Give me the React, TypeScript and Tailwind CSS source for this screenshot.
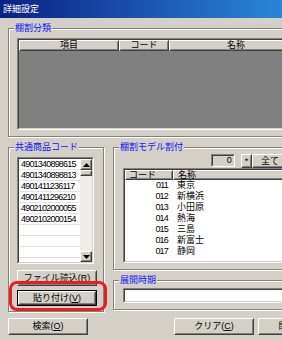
import React from "react";

type BoxProps = { className?: string; inner?: string; children?: React.ReactNode };

function Raised({ className = "", inner = "", children }: BoxProps) {
  return (
    <div className={"border border-t-white border-l-white border-b-[#404040] border-r-[#404040] bg-[#d4d0c8] " + className}>
      <div className={"w-full h-full border border-t-transparent border-l-transparent border-b-[#808080] border-r-[#808080] flex items-center justify-center whitespace-nowrap " + inner}>
        {children}
      </div>
    </div>
  );
}

function Sunken({ className = "", inner = "", children }: BoxProps) {
  return (
    <div className={"border border-t-[#808080] border-l-[#808080] border-b-white border-r-white " + className}>
      <div className={"w-full h-full border border-t-[#404040] border-l-[#404040] border-b-[#d4d0c8] border-r-[#d4d0c8] overflow-hidden " + inner}>
        {children}
      </div>
    </div>
  );
}

function Group({ label, className = "", children }: { label: string; className?: string; children?: React.ReactNode }) {
  return (
    <fieldset className={"border border-[#808080] shadow-[inset_1px_1px_0_#fff,1px_1px_0_#fff] " + className}>
      <legend className="ml-[5px] px-[1px] bg-[#d4d0c8] text-[#1010ff] leading-[11px]">{label}</legend>
      {children}
    </fieldset>
  );
}

function Arrow({ down = false }: { down?: boolean }) {
  return (
    <svg width="7" height="4" viewBox="0 0 7 4">
      {down ? <polygon points="0,0 7,0 3.5,4" fill="#000" /> : <polygon points="0,4 7,4 3.5,0" fill="#000" />}
    </svg>
  );
}

export default function App() {
  const codes = [
    "4901340898615",
    "4901340898813",
    "4901411236117",
    "4901411296210",
    "4902102000055",
    "4902102000154",
    "",
    "",
    "",
  ];
  const stores = [
    ["011", "東京"],
    ["012", "新横浜"],
    ["013", "小田原"],
    ["014", "熱海"],
    ["015", "三島"],
    ["016", "新富士"],
    ["017", "静岡"],
  ];
  return (
    <div className="relative w-[282px] h-[340px] overflow-hidden bg-[#d4d0c8] text-black text-[9px] leading-[11px] font-['Liberation_Sans','Noto_Sans_CJK_JP',sans-serif]">
      <div className="h-[18px] flex items-center pl-[3px] text-white bg-[linear-gradient(to_right,#0a2184,#2a86d8)]">
        詳細設定
      </div>
      <div className="flex flex-col pl-[8px] pt-[5px] w-max">
        <Group label="棚割分類" className="w-[310px] shrink-0">
          <div className="pl-[8px] pt-[4px] pb-[6px]">
            <Sunken className="w-[290px] h-[92px]" inner="flex flex-col">
              <div className="flex h-[11px] shrink-0">
                <Raised className="w-[100px] h-full shrink-0">項目</Raised>
                <Raised className="w-[50px] h-full shrink-0">コード</Raised>
                <Raised className="w-[134px] h-full shrink-0">名称</Raised>
              </div>
              <div className="flex-1 bg-[#808080]" />
            </Sunken>
          </div>
        </Group>

        <div className="flex mt-[5px]">
          <Group label="共通商品コード" className="w-[96px] shrink-0">
            <div className="pl-[8px] pt-[4px] pb-[5px] flex flex-col">
              <Sunken className="w-[77px] h-[107px]" inner="flex bg-white">
                <div className="flex-1 flex flex-col">
                  {codes.map((c, i) => (
                    <div key={i} className="h-[11px] shrink-0 border-b border-b-[#e2e2e2] pl-[2px] tracking-[-0.8px]">
                      {c}
                    </div>
                  ))}
                </div>
                <div className="w-[12px] shrink-0 flex flex-col bg-[#eeede9]">
                  <Raised className="h-[11px] shrink-0"><Arrow /></Raised>
                  <Raised className="h-[6px] shrink-0" />
                  <div className="flex-1" />
                  <Raised className="h-[11px] shrink-0"><Arrow down /></Raised>
                </div>
              </Sunken>
              <Raised className="w-[80px] h-[16px] mt-[6px]">
                ファイル読込(<span className="underline">R</span>)
              </Raised>
              <div className="mt-[4px] w-[80px] h-[16px] border border-black">
                <Raised className="w-full h-full">
                  貼り付け(<span className="underline">V</span>)
                </Raised>
              </div>
            </div>
          </Group>

          <div className="ml-[9px] w-[200px] shrink-0 flex flex-col">
            <Group label="棚割モデル割付">
              <div className="flex pl-[97px] pt-[1px] h-[15px]">
                <Sunken className="w-[24px] h-[13px] shrink-0" inner="flex items-center justify-end pr-[2px] tracking-[-0.8px]">
                  0
                </Sunken>
                <Raised className="ml-[6px] w-[11px] h-[14px] shrink-0">*</Raised>
                <Raised className="w-[36px] h-[14px] shrink-0">全て</Raised>
              </div>
              <div className="pl-[9px] pb-[6px]">
                <Sunken className="w-[190px] h-[95px]" inner="bg-white flex flex-col">
                  <div className="flex h-[10px] shrink-0">
                    <Raised className="w-[48px] h-full shrink-0" inner="justify-start pl-[2px]">コード</Raised>
                    <Raised className="w-[140px] h-full shrink-0" inner="justify-start pl-[3px]">名称</Raised>
                  </div>
                  {stores.map(([c, n]) => (
                    <div key={c} className="flex h-[11px] shrink-0">
                      <div className="w-[48px] shrink-0 text-right pr-[5px] tracking-[-0.8px]">{c}</div>
                      <div className="pl-[4px]">{n}</div>
                    </div>
                  ))}
                </Sunken>
              </div>
            </Group>
            <Group label="展開時期" className="mt-[5px]">
              <div className="pl-[9px] pt-[2px] pb-[6px]">
                <Sunken className="w-[190px] h-[15px]" inner="bg-white" />
              </div>
            </Group>
          </div>
        </div>

        <div className="flex mt-[6px]">
          <Raised className="w-[80px] h-[17px] shrink-0">
            検索(<span className="underline">O</span>)
          </Raised>
          <Raised className="ml-[86px] w-[80px] h-[17px] shrink-0">
            クリア(<span className="underline">C</span>)
          </Raised>
          <Raised className="ml-[4px] w-[80px] h-[17px] shrink-0">
            閉じる(<span className="underline">X</span>)
          </Raised>
        </div>
      </div>

      <div className="absolute left-[9px] top-[281px] w-[98px] h-[30px] border-[3px] border-[#ee1c1c] rounded-[8px]" />
    </div>
  );
}
